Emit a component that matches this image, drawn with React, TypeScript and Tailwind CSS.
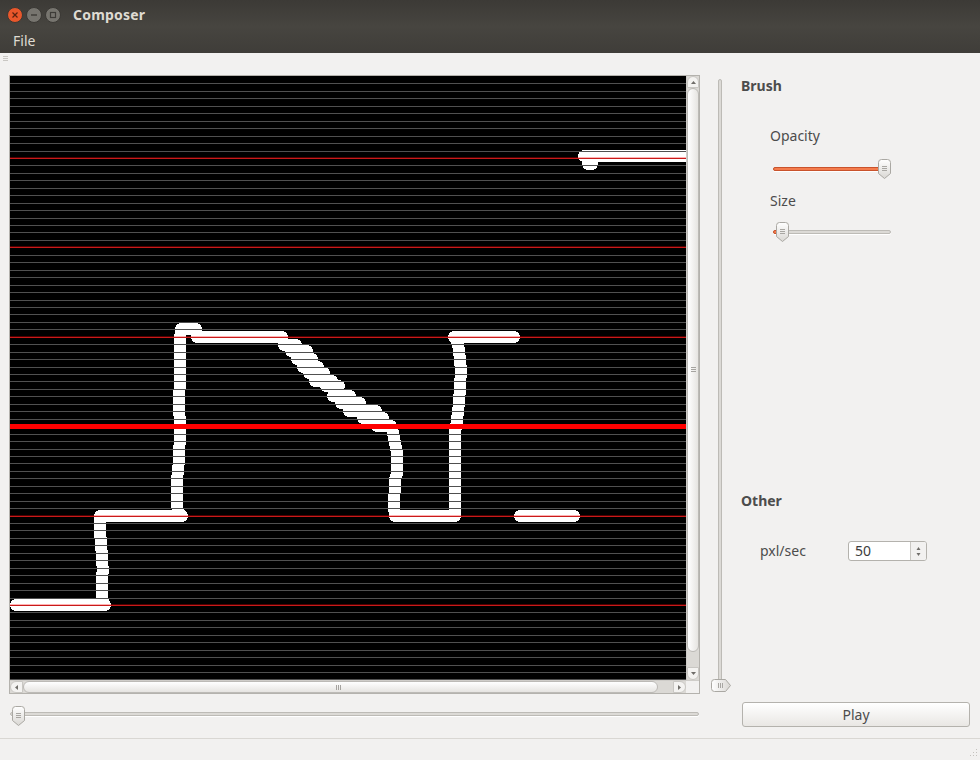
import React from "react";

const FONT = { fontFamily: '"Noto Sans", "Open Sans", sans-serif' };

const gridYs = Array.from({ length: 81 }, (_, i) => i + 1).map((k) => ({ k, y: 7.45 * k }));

const strokes: string[] = [
  "6,529 95,529 92,524 92,499 93,496 92,484 91,464 90,459 90,440 91,440 172,440 168,436 167,429 167,404 169,384 170,354 169,324 170,304 170,264 171,253 186,253",
  "187,261 272,261",
  "274,269 286,269",
  "281,275 297,275",
  "287,283 302,283",
  "293,291 308,291",
  "299,297 314,297",
  "305,305 322,305",
  "316,310 329,310",
  "323,320 340,320",
  "331,327 350,327",
  "339,335 366,335",
  "353,342 373,342",
  "367,350 381,350",
  "381,350 383,357 387,377 387,397 385,404 384,431 385,440 445,440 445,427 445,381 445,357 447,344 449,327 451,294 449,274 447,265 444,261 504,261",
  "510,440 564,440",
  "574,80 676,80",
  "578,88 582,88",
];

function Canvas() {
  return (
    <svg width="676" height="604" viewBox="0 0 676 604" className="block bg-black">
      {strokes.map((s, i) => (
        <polyline
          key={i}
          points={s}
          fill="none"
          stroke="#ffffff"
          strokeWidth="12"
          strokeLinecap="round"
          strokeLinejoin="round"
          shapeRendering="crispEdges"
        />
      ))}
      {gridYs.map(({ k, y }) => {
        const row = Math.round(y);
        if ((k - 11) % 12 !== 0) {
          return <rect key={k} x="0" y={row} width="676" height="1" fill="#505050" shapeRendering="crispEdges" />;
        }
        if (k === 47) {
          return <rect key={k} x="0" y={348} width="676" height="5" fill="#ff0000" shapeRendering="crispEdges" />;
        }
        return (
          <g key={k} shapeRendering="crispEdges">
            <rect x="0" y={row - 1} width="676" height="1" fill="#ff0000" fillOpacity="0.3" />
            <rect x="0" y={row} width="676" height="1" fill="#c81a1a" />
          </g>
        );
      })}
    </svg>
  );
}

function ThumbDown() {
  return (
    <svg width="13" height="20" viewBox="0 0 13 20" className="block">
      <defs>
        <linearGradient id="td" x1="0" y1="0" x2="0" y2="1">
          <stop offset="0" stopColor="#ffffff" />
          <stop offset="1" stopColor="#d9d7d3" />
        </linearGradient>
      </defs>
      <path d="M3.5.5h6a3 3 0 0 1 3 3v11L6.5 19.5.5 14.5v-11a3 3 0 0 1 3-3z" fill="url(#td)" stroke="#aaa8a3" />
      <path d="M4 7.5h5M4 9.5h5M4 11.5h5" stroke="#a8a6a2" />
    </svg>
  );
}

function ThumbRight() {
  return (
    <svg width="20" height="13" viewBox="0 0 20 13" className="block">
      <defs>
        <linearGradient id="tr" x1="0" y1="0" x2="1" y2="0">
          <stop offset="0" stopColor="#ffffff" />
          <stop offset="1" stopColor="#d9d7d3" />
        </linearGradient>
      </defs>
      <path d="M3.5.5h11l5 6-5 6h-11a3 3 0 0 1-3-3v-6a3 3 0 0 1 3-3z" fill="url(#tr)" stroke="#aaa8a3" />
      <path d="M7.5 4v5M9.5 4v5M11.5 4v5" stroke="#a8a6a2" />
    </svg>
  );
}

function HSlider({ trackW, fill, thumb }: { trackW: number; fill: number; thumb: number }) {
  return (
    <div className="relative h-5" style={{ width: trackW }}>
      <div className="absolute left-0 right-0 top-[8px] h-[4px] rounded-full border border-[#bdbbb6] bg-[#dcdad6] shadow-[0_1px_0_#ffffff]" />
      <div
        className="absolute left-0 top-[8px] h-[4px] rounded-full border border-[#c9532c] bg-[#f47c4d]"
        style={{ width: fill }}
      />
      <div className="absolute top-0" style={{ left: thumb }}>
        <ThumbDown />
      </div>
    </div>
  );
}

function Arrow({ d }: { d: string }) {
  return (
    <svg width="7" height="7" viewBox="0 0 7 7" className="block">
      <path d={d} fill="#6f6d69" />
    </svg>
  );
}

function VScroll() {
  return (
    <div className="w-[13px] h-[604px] flex flex-col bg-[#dbd9d5] border-l border-[#cfcdc9]">
      <div className="h-[12px] rounded-t-[6px] bg-[#f4f3f1] border border-[#c9c7c3] flex items-center justify-center">
        <Arrow d="M3.5 2 6 5H1z" />
      </div>
      <div className="h-[564px] rounded-[6px] border border-[#bcbab6] bg-gradient-to-r from-white to-[#e6e4e1] flex items-center justify-center pb-[2px]">
        <div className="w-[5px] h-[5px] flex flex-col justify-between">
          <div className="h-px bg-[#a5a39f]" />
          <div className="h-px bg-[#a5a39f]" />
          <div className="h-px bg-[#a5a39f]" />
        </div>
      </div>
      <div className="flex-1" />
      <div className="h-[13px] rounded-b-[6px] bg-[#f4f3f1] border border-[#c9c7c3] flex items-center justify-center">
        <Arrow d="M1 2h5L3.5 5z" />
      </div>
    </div>
  );
}

function HScroll() {
  return (
    <div className="h-[13px] flex bg-[#f2f1f0] border-t border-[#cfcdc9]">
      <div className="w-[676px] flex bg-[#dbd9d5]">
        <div className="w-[13px] rounded-l-[6px] bg-[#f4f3f1] border border-[#c9c7c3] flex items-center justify-center">
          <Arrow d="M2 3.5 5 1v5z" />
        </div>
        <div className="w-[635px] rounded-[6px] border border-[#bcbab6] bg-gradient-to-b from-white to-[#e6e4e1] flex items-center justify-center pr-[4px]">
          <div className="w-[5px] h-[5px] flex justify-between">
            <div className="w-px bg-[#a5a39f]" />
            <div className="w-px bg-[#a5a39f]" />
            <div className="w-px bg-[#a5a39f]" />
          </div>
        </div>
        <div className="flex-1" />
        <div className="w-[13px] rounded-r-[6px] bg-[#f4f3f1] border border-[#c9c7c3] flex items-center justify-center">
          <Arrow d="M5 3.5 2 1v5z" />
        </div>
      </div>
    </div>
  );
}

function Grip() {
  return (
    <div className="w-[5px] flex flex-col gap-[1px]">
      <div className="h-px bg-[#c9c7c3]" />
      <div className="h-px bg-[#c9c7c3]" />
      <div className="h-px bg-[#c9c7c3]" />
    </div>
  );
}

function WinBtn({ color, children }: { color: string; children: React.ReactNode }) {
  return (
    <div
      className={`w-[16px] h-[16px] rounded-full border border-[#3a3834] flex items-center justify-center ${color}`}
    >
      <svg width="8" height="8" viewBox="0 0 8 8">
        {children}
      </svg>
    </div>
  );
}

export default function App() {
  return (
    <div className="w-[980px] h-[760px] flex flex-col bg-[#f2f1f0] text-[#4c4c4c] overflow-hidden" style={FONT}>
      <header className="h-[53px] bg-gradient-to-b from-[#3c3a36] via-[#474540] to-[#3f3d39] flex flex-col shrink-0">
        <div className="h-[30px] flex items-center pl-[7px]">
          <div className="flex gap-[3px]">
            <WinBtn color="bg-[#e9572b]">
              <path d="M1.5 1.5l5 5M6.5 1.5l-5 5" stroke="#5a2310" strokeWidth="1.2" />
            </WinBtn>
            <WinBtn color="bg-[#77756f]">
              <path d="M1 4h6" stroke="#3d3b37" strokeWidth="1.4" />
            </WinBtn>
            <WinBtn color="bg-[#77756f]">
              <rect x="1.5" y="1.5" width="5" height="5" fill="none" stroke="#3d3b37" strokeWidth="1.2" />
            </WinBtn>
          </div>
          <span className="ml-[12px] text-[14px] font-bold text-[#dfdbd2] tracking-[0.2px] leading-[18px]">Composer</span>
        </div>
        <div className="h-[21px] flex items-center pl-[13px] text-[14px] text-[#dfdbd2] leading-[18px]">File</div>
      </header>

      <div className="flex-1 flex relative">
        <div className="absolute left-[3px] top-[3px]">
          <Grip />
        </div>
        <div className="ml-[9px] w-[691px] flex flex-col pt-[22px]">
          <div className="border border-[#b4b2ad] h-[619px] flex flex-col">
            <div className="flex">
              <Canvas />
              <VScroll />
            </div>
            <HScroll />
          </div>
          <div className="mt-[12px]">
            <div className="relative h-5 w-[689px] ml-[1px]">
              <div className="absolute inset-x-0 top-[6px] h-[4px] rounded-full border border-[#bdbbb6] bg-[#dcdad6] shadow-[0_1px_0_#ffffff]" />
              <div className="absolute left-[2px] top-0">
                <ThumbDown />
              </div>
            </div>
          </div>
        </div>

        <div className="ml-[11px] w-[20px] pt-[26px] relative">
          <div className="w-[4px] h-[604px] ml-[7px] rounded-full border border-[#bdbbb6] bg-[#dcdad6]" />
          <div className="absolute left-0 top-[626px]">
            <ThumbRight />
          </div>
        </div>

        <div className="ml-[10px] w-[229px] flex flex-col">
          <div className="flex-1 pt-[24px]">
            <div className="text-[14px] font-bold leading-[18px] text-[#4c4c4c]">Brush</div>
            <div className="ml-[29px] mt-[32px] text-[14px] leading-[18px]">Opacity</div>
            <div className="ml-[32px] mt-[14px]">
              <HSlider trackW={118} fill={110} thumb={105} />
            </div>
            <div className="ml-[29px] mt-[13px] text-[14px] leading-[18px]">Size</div>
            <div className="ml-[32px] mt-[12px]">
              <HSlider trackW={118} fill={8} thumb={3} />
            </div>
          </div>
          <div className="text-[14px] font-bold leading-[18px]">Other</div>
          <div className="flex items-center ml-[19px] mt-[31px] h-[20px]">
            <span className="w-[88px] text-[14px] leading-[18px]">pxl/sec</span>
            <div className="w-[79px] h-[20px] rounded-[3px] border border-[#b4b2ad] bg-white flex overflow-hidden">
              <span className="flex-1 pl-[6px] text-[14px] leading-[18px] text-[#3c3c3c]">50</span>
              <div className="w-[16px] bg-[#f2f1f0] border-l border-[#c9c7c3] flex flex-col items-center justify-center gap-[1px]">
                <Arrow d="M3.5 3 5.5 6h-4z" />
                <Arrow d="M1.5 1h4l-2 3z" />
              </div>
            </div>
          </div>
          <button className="mt-[141px] mb-[11px] h-[25px] w-[228px] ml-[1px] rounded-[3px] border border-[#b4b2ad] bg-gradient-to-b from-white to-[#e9e7e4] text-[14px] leading-[18px] text-[#4c4c4c]">
            Play
          </button>
        </div>
      </div>

      <div className="h-[22px] shrink-0 border-t border-[#d9d7d3] flex justify-end items-end pr-[2px] pb-[2px]">
        <svg width="10" height="10" viewBox="0 0 10 10" className="block">
          <path d="M8 1h1v1H8zM5 4h1v1H5zM8 4h1v1H8zM2 7h1v1H2zM5 7h1v1H5zM8 7h1v1H8z" fill="#c4c2be" />
        </svg>
      </div>
    </div>
  );
}
